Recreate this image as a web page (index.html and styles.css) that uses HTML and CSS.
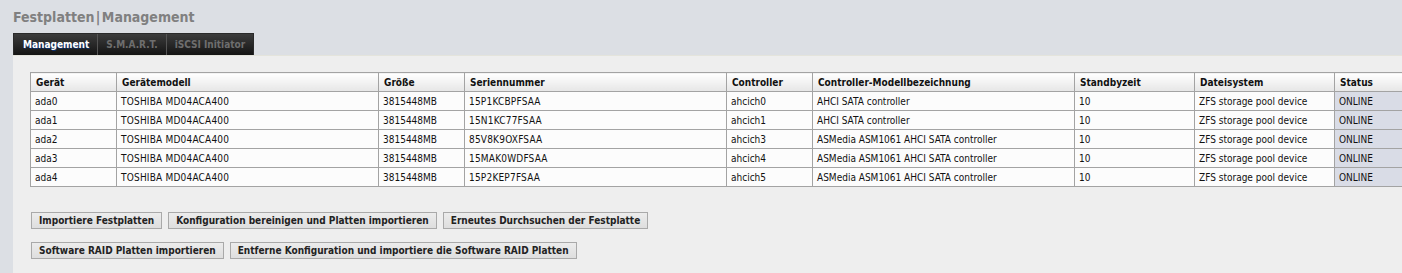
FILE: index.html
```html
<!DOCTYPE html>
<html lang="de">
<head>
  <meta charset="UTF-8" />
  <title>Festplatten | Management</title>
  <link rel="stylesheet" href="styles.css">
</head>
<body>
  <h1 class="title">Festplatten | Management</h1>

  <ul class="tabs">
    <li class="tab active">Management</li>
    <li class="tab">S.M.A.R.T.</li>
    <li class="tab">iSCSI Initiator</li>
  </ul>

  <div class="panel">
    <table class="disks">
      <colgroup>
        <col style="width: 86px">
        <col style="width: 262px">
        <col style="width: 86px">
        <col style="width: 262px">
        <col style="width: 86px">
        <col style="width: 262px">
        <col style="width: 120px">
        <col style="width: 140px">
        <col style="width: 110px">
      </colgroup>
      <thead>
        <tr>
          <th>Gerät</th>
          <th>Gerätemodell</th>
          <th>Größe</th>
          <th>Seriennummer</th>
          <th>Controller</th>
          <th>Controller-Modellbezeichnung</th>
          <th>Standbyzeit</th>
          <th>Dateisystem</th>
          <th>Status</th>
        </tr>
      </thead>
      <tbody>
        <tr>
          <td>ada0</td><td class="caps">TOSHIBA MD04ACA400</td><td>3815448MB</td><td class="caps">15P1KCBPFSAA</td>
          <td>ahcich0</td><td>AHCI SATA controller</td><td>10</td><td>ZFS storage pool device</td><td class="status">ONLINE</td>
        </tr>
        <tr>
          <td>ada1</td><td class="caps">TOSHIBA MD04ACA400</td><td>3815448MB</td><td class="caps">15N1KC77FSAA</td>
          <td>ahcich1</td><td>AHCI SATA controller</td><td>10</td><td>ZFS storage pool device</td><td class="status">ONLINE</td>
        </tr>
        <tr>
          <td>ada2</td><td class="caps">TOSHIBA MD04ACA400</td><td>3815448MB</td><td class="caps">85V8K9OXFSAA</td>
          <td>ahcich3</td><td>ASMedia ASM1061 AHCI SATA controller</td><td>10</td><td>ZFS storage pool device</td><td class="status">ONLINE</td>
        </tr>
        <tr>
          <td>ada3</td><td class="caps">TOSHIBA MD04ACA400</td><td>3815448MB</td><td class="caps">15MAK0WDFSAA</td>
          <td>ahcich4</td><td>ASMedia ASM1061 AHCI SATA controller</td><td>10</td><td>ZFS storage pool device</td><td class="status">ONLINE</td>
        </tr>
        <tr>
          <td>ada4</td><td class="caps">TOSHIBA MD04ACA400</td><td>3815448MB</td><td class="caps">15P2KEP7FSAA</td>
          <td>ahcich5</td><td>ASMedia ASM1061 AHCI SATA controller</td><td>10</td><td>ZFS storage pool device</td><td class="status">ONLINE</td>
        </tr>
      </tbody>
    </table>

    <div class="actions">
      <div class="btn-row">
        <button class="btn">Importiere Festplatten</button>
        <button class="btn">Konfiguration bereinigen und Platten importieren</button>
        <button class="btn">Erneutes Durchsuchen der Festplatte</button>
      </div>
      <div class="btn-row">
        <button class="btn">Software RAID Platten importieren</button>
        <button class="btn">Entferne Konfiguration und importiere die Software RAID Platten</button>
      </div>
    </div>
  </div>
</body>
</html>
```

FILE: styles.css
```css
html, body {
  margin: 0;
  padding: 0;
  height: 100%;
  overflow: hidden;
}

body {
  background: #dcdfe4;
  font-family: "DejaVu Sans", Verdana, sans-serif;
  font-size: 10px;
  color: #111;
  display: flex;
  flex-direction: column;
}

/* Überschrift */
.title {
  margin: 0;
  padding: 8px 13px 0;
  height: 25px;
  font-family: "DejaVu Sans", sans-serif;
  font-stretch: condensed;
  font-size: 14px;
  font-weight: bold;
  line-height: 18px;
  word-spacing: -3px;
  color: #808080;
}

/* Reiter */
.tabs {
  list-style: none;
  margin: 0 0 0 13px;
  padding: 0;
  display: flex;
  align-self: flex-start;
  height: 22px;
  background: linear-gradient(#3c3c3c, #141414);
  border: 1px solid #2a2a2a;
  border-bottom: none;
  box-sizing: border-box;
}

.tab {
  padding: 0 8px;
  line-height: 21px;
  font-weight: bold;
  font-size: 10px;
  color: #6e6e6e;
  border-right: 1px solid #555;
  font-stretch: condensed;
}

.tab:first-child {
  padding: 0 8px 0 9px;
}

.tab:last-child {
  border-right: none;
}

.tab.active {
  color: #fff;
  text-shadow: 1px 1px 0 rgba(0, 60, 160, 0.6);
}

/* Inhalt */
.panel {
  flex: 1;
  margin-left: 13px;
  padding: 17px 0 0 17px;
  background: #eeeeee;
  box-shadow: inset 0 1px 0 #e4e4dc;
}

.disks {
  table-layout: fixed;
  border-collapse: collapse;
  width: 1414px;
  font-stretch: condensed;
}

.disks th,
.disks td {
  border: 1px solid #a3a3a3;
  padding: 0 4px;
  height: 18px;
  text-align: left;
  white-space: nowrap;
  overflow: hidden;
}

.disks th {
  height: 18px;
  font-weight: bold;
  background: linear-gradient(#ffffff, #e6e6e6);
  color: #111;
  padding-left: 5px;
}

.disks td {
  background: #fcfcfc;
}

.disks td.caps {
  letter-spacing: 0.2px;
}

.disks td.status {
  background: #d9dce6;
}

/* Knöpfe */
.actions {
  margin-top: 25px;
  margin-left: 1px;
  display: flex;
  flex-direction: column;
  gap: 13px;
}

.btn-row {
  display: flex;
  gap: 6px;
}

.btn {
  height: 17px;
  padding: 0 7px;
  border: 1px solid #a9a9a9;
  background: linear-gradient(#ececec, #dedede);
  font-family: "DejaVu Sans", Verdana, sans-serif;
  font-stretch: condensed;
  font-size: 10px;
  font-weight: bold;
  color: #222;
  line-height: 15px;
  cursor: pointer;
}
```
